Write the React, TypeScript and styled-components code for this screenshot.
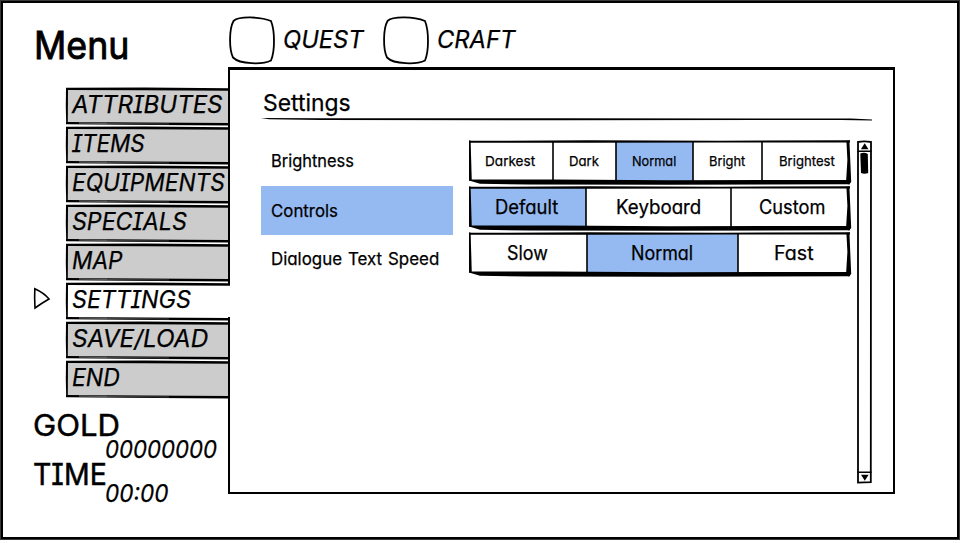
import React, { useLayoutEffect, useRef, useState } from "react";
import styled, { createGlobalStyle } from "styled-components";

const INK = "#000";
const BLUE = "#95baf2";
const GREY = "#cccccc";

const GlobalStyle = createGlobalStyle`
  *, *::before, *::after { box-sizing: border-box; }
  body {
    margin: 0;
    background: #fff;
    color: ${INK};
    font-family: Inter, "Open Sans", sans-serif;
    font-feature-settings: "cv11" 1, "cv08" 1;
    overflow: hidden;
  }
  svg { display: block; }
`;

/* Text squeezed or stretched to a set width */
const FitBox = styled.span<{ $w: number; $size: number; $italic?: boolean; $stroke?: number }>`
  display: block;
  flex: none;
  width: ${(p) => p.$w}px;
  height: ${(p) => p.$size}px;
  line-height: ${(p) => p.$size}px;
  font-size: ${(p) => p.$size}px;
  font-style: ${(p) => (p.$italic ? "italic" : "normal")};
  font-weight: 400;
  word-spacing: 0.07em;
  white-space: nowrap;
  -webkit-text-stroke: ${(p) => p.$stroke ?? 0.25}px ${INK};
`;
const FitInner = styled.span`
  display: inline-block;
  transform-origin: 0 50%;
`;

type FitProps = { text: string; w: number; size: number; italic?: boolean; stroke?: number };

function Fit({ text, w, size, italic, stroke }: FitProps) {
  const ref = useRef<HTMLSpanElement>(null);
  const [scale, setScale] = useState(1);
  useLayoutEffect(() => {
    if (ref.current) setScale(w / ref.current.offsetWidth);
  }, [text, w, size]);
  return (
    <FitBox $w={w} $size={size} $italic={italic} $stroke={stroke}>
      <FitInner ref={ref} style={{ transform: `scaleX(${scale})` }}>
        {text}
      </FitInner>
    </FitBox>
  );
}

const Screen = styled.div`
  display: grid;
  grid-template-columns: 225px 1fr;
  width: 960px;
  height: 540px;
  border: 3px solid ${INK};
  background: #fff;
  outline: 1px solid #383838;
  outline-offset: -1px;
`;

const Side = styled.aside`
  position: relative;
  z-index: 1;
  width: 227px;
`;

const Title = styled.h1`
  display: flex;
  align-items: center;
  height: 84px;
  margin: 0;
  padding-left: 31px;
`;

const Nav = styled.nav`
  display: flex;
  flex-direction: column;
`;

const NavRow = styled.div`
  display: flex;
  height: 39px;
`;

const Marker = styled.div`
  flex: none;
  width: 62px;
  padding: 5px 0 0 30px;
`;

const Tab = styled.div`
  position: relative;
  width: 165px;
  height: 39px;
  padding: 6px 0 0 7px;
`;

const TabShape = styled.svg`
  position: absolute;
  inset: 0;
  z-index: -1;
`;

const Stats = styled.dl`
  margin: 11px 0 0;
  padding-left: 31px;
`;
const StatName = styled.dt`
  height: 21px;
  margin-left: -1px;
`;
const StatValue = styled.dd<{ $drop: number }>`
  height: 28px;
  margin: 0;
  padding: ${(p) => p.$drop}px 0 0 71px;
`;

const Main = styled.main`
  display: flex;
  flex-direction: column;
  align-items: flex-start;
`;

const TopBar = styled.div`
  display: flex;
  height: 64px;
`;

const Shortcut = styled.div`
  display: flex;
  width: 154px;
  padding-top: 12px;
  gap: 8px;
`;
const ShortcutLabel = styled.div`
  padding-top: 13px;
`;

const Panel = styled.section`
  width: 667px;
  height: 427px;
  padding: 19px 22px 0 30px;
  border: solid ${INK};
  border-width: 3px 2px 2px 2px;
`;

const PanelHead = styled.header`
  height: 51px;
  margin-left: 1px;
`;
const HeadText = styled.div`
  height: 29px;
  padding: 2px 0 0 2px;
`;

const PanelBody = styled.div`
  display: grid;
  grid-template-columns: 209px 387px 16px;
`;

const Labels = styled.div`
  padding-left: 1px;
`;
const Label = styled.div<{ $on?: boolean; $h: number; $lift?: number }>`
  display: flex;
  align-items: center;
  width: 192px;
  height: ${(p) => p.$h}px;
  padding: 0 0 ${(p) => p.$lift ?? 0}px 10px;
  background: ${(p) => (p.$on ? BLUE : "transparent")};
`;

const Choices = styled.div`
  display: flex;
  flex-direction: column;
`;
const Choice = styled.div`
  position: relative;
  display: flex;
  width: 384px;
  height: 46px;
`;
const ChoiceShape = styled.svg`
  position: absolute;
  left: 0;
  top: 0;
`;
const Option = styled.div<{ $w: number; $on?: boolean; $indent: number }>`
  flex: none;
  width: ${(p) => p.$w}px;
  height: 40px;
  margin-top: 1px;
  padding: 2px 0 0 ${(p) => p.$indent}px;
  display: flex;
  align-items: center;
  background: ${(p) => (p.$on ? BLUE : "transparent")};
`;

const tabs: { text: string; w: number; on?: boolean }[] = [
  { text: "ATTRIBUTES", w: 150 },
  { text: "ITEMS", w: 73 },
  { text: "EQUIPMENTS", w: 153 },
  { text: "SPECIALS", w: 115 },
  { text: "MAP", w: 51 },
  { text: "SETTINGS", w: 119, on: true },
  { text: "SAVE/LOAD", w: 136 },
  { text: "END", w: 48 },
];

type Opt = { text: string; w: number; tw: number; indent: number; on?: boolean };
const choices: { size: number; options: Opt[] }[] = [
  {
    size: 13.6,
    options: [
      { text: "Darkest", w: 84, tw: 50, indent: 16 },
      { text: "Dark", w: 63, tw: 30, indent: 16 },
      { text: "Normal", w: 77, tw: 44, indent: 16, on: true },
      { text: "Bright", w: 69, tw: 36, indent: 16 },
      { text: "Brightest", w: 86, tw: 56, indent: 16.5 },
    ],
  },
  {
    size: 19.6,
    options: [
      { text: "Default", w: 117, tw: 63, indent: 26, on: true },
      { text: "Keyboard", w: 145, tw: 85, indent: 29.5 },
      { text: "Custom", w: 118, tw: 66, indent: 27.5 },
    ],
  },
  {
    size: 19.6,
    options: [
      { text: "Slow", w: 118, tw: 41, indent: 37.5 },
      { text: "Normal", w: 151, tw: 62, indent: 44, on: true },
      { text: "Fast", w: 111, tw: 40, indent: 36 },
    ],
  },
];

function SketchTab({ on }: { on?: boolean }) {
  return (
    <TabShape width="165" height="39" viewBox="0 0 165 39">
      <path d={on ? "M2 2 L165 2 V35 L2 36Z" : "M2 2 L163 3 V37 L2 36Z"} fill={on ? "#fff" : GREY} />
      <path d="M1 .7 L80 .5 L165 1.2 V3.7 L80 3.2 L1 3Z" fill={INK} />
      <path d="M1 2 L3 2 L2.8 37 L1.2 36.5 L.8 20Z" fill={INK} />
      <path d="M1 34.9 L80 35.4 L165 36 V38.5 L90 38 L1 37.2Z" fill={INK} />
      <path d="M14 36 L42 36.3" stroke="#777" strokeWidth="1" />
      <path d="M42 36.5 L104 37" stroke="#444" strokeWidth="1" />
    </TabShape>
  );
}

function SketchSquare() {
  return (
    <svg width="47" height="50" viewBox="0 0 47 50" fill="none" stroke={INK} strokeWidth="1.8">
      <path d="M5.5 6 C11 1 32 1.6 43 6 C47 16 47 36 43 45.5 C35 49.6 12 49.6 5 42.5 C1 34.5 1 14 5.5 6Z" />
    </svg>
  );
}

function SketchChoice({ dividers }: { dividers: number[] }) {
  return (
    <ChoiceShape width="384" height="47" viewBox="0 0 384 47">
      <path d="M0 .8 L120 .3 L250 .7 L381 .3 V2.4 L250 2.4 L120 2.7 L0 2.7Z" fill={INK} />
      <path d="M0 .6 H1.6 L2.8 41 L0 40.5Z" fill={INK} />
      <path d="M0 39.6 L84 39.6 L200 40.2 L380 40 L381 44.2 L200 44.8 L60 44.6 L11 43.8 L0 40.6Z" fill={INK} />
      <path d="M377.4 .8 L380.4 .6 L382.2 42 L380 44.6 L377 43 L378.4 20Z" fill={INK} />
      {dividers.map((x) => (
        <path key={x} d={`M${x} 1 V44`} stroke={INK} strokeWidth="1.6" />
      ))}
    </ChoiceShape>
  );
}

function ScrollBar() {
  return (
    <svg width="16" height="345" viewBox="0 0 16 345" fill={INK}>
      <path
        d="M2 2 Q8 .8 15 2 L14.8 342.2 L2 342.6Z"
        fill="none"
        stroke={INK}
        strokeWidth="1.8"
      />
      <path d="M1.5 11.3 H15.5 M1.5 332.2 H15.5" stroke={INK} strokeWidth="1.6" />
      <path d="M8.7 3.3 L12.5 9.2 H4.9Z" />
      <path d="M4.3 13.5 Q8.5 12 11.8 14 L12.2 33 Q8.5 34.5 5 33 Z" />
      <path d="M5 334.8 H12.6 L8.8 340.8Z" />
    </svg>
  );
}

export default function App() {
  return (
    <>
      <GlobalStyle />
      <Screen>
        <Side>
          <Title>
            <Fit text="Menu" w={95} size={38} stroke={0.9} />
          </Title>
          <Nav>
            {tabs.map((t) => (
              <NavRow key={t.text}>
                <Marker>
                  {t.on && (
                    <svg width="18" height="24" viewBox="0 0 18 24">
                      <path d="M1.8 1.8 Q11 6 16 12 Q9 16 2 21 Q1.4 10 1.8 1.8Z" fill="#fff" stroke={INK} strokeWidth="1.6" />
                    </svg>
                  )}
                </Marker>
                <Tab>
                  <SketchTab on={t.on} />
                  <Fit text={t.text} w={t.w} size={24} italic />
                </Tab>
              </NavRow>
            ))}
          </Nav>
          <Stats>
            <StatName>
              <Fit text="GOLD" w={87} size={30} stroke={0.5} />
            </StatName>
            <StatValue $drop={7}>
              <Fit text="00000000" w={112} size={24} italic />
            </StatValue>
            <StatName>
              <Fit text="TIME" w={74} size={30} stroke={0.5} />
            </StatName>
            <StatValue $drop={2}>
              <Fit text="00:00" w={63} size={24} italic />
            </StatValue>
          </Stats>
        </Side>
        <Main>
          <TopBar>
            {[
              { text: "QUEST", w: 81 },
              { text: "CRAFT", w: 78 },
            ].map((s) => (
              <Shortcut key={s.text}>
                <SketchSquare />
                <ShortcutLabel>
                  <Fit text={s.text} w={s.w} size={24} italic />
                </ShortcutLabel>
              </Shortcut>
            ))}
          </TopBar>
          <Panel>
            <PanelHead>
              <HeadText>
                <Fit text="Settings" w={88} size={23.4} />
              </HeadText>
              <svg width="612" height="4" viewBox="0 0 612 4">
                <path d="M0 0 L60 .3 L300 .2 L590 .5 L611 1.5 V2.4 L580 2 L300 2.2 L60 1.9 L8 1.3Z" fill={INK} />
              </svg>
            </PanelHead>
            <PanelBody>
              <Labels>
                <Label $h={46} $lift={4}>
                  <Fit text="Brightness" w={83} size={17.6} />
                </Label>
                <Label $h={49} $on>
                  <Fit text="Controls" w={67} size={17.6} />
                </Label>
                <Label $h={48}>
                  <Fit text="Dialogue Text Speed" w={168} size={17.6} />
                </Label>
              </Labels>
              <Choices>
                {choices.map((c, i) => {
                  let x = 0;
                  const dividers = c.options.slice(0, -1).map((o) => (x += o.w));
                  return (
                    <Choice key={i}>
                      {c.options.map((o) => (
                        <Option key={o.text} $w={o.w} $on={o.on} $indent={o.indent}>
                          <Fit text={o.text} w={o.tw} size={c.size} />
                        </Option>
                      ))}
                      <SketchChoice dividers={dividers} />
                    </Choice>
                  );
                })}
              </Choices>
              <ScrollBar />
            </PanelBody>
          </Panel>
        </Main>
      </Screen>
    </>
  );
}
